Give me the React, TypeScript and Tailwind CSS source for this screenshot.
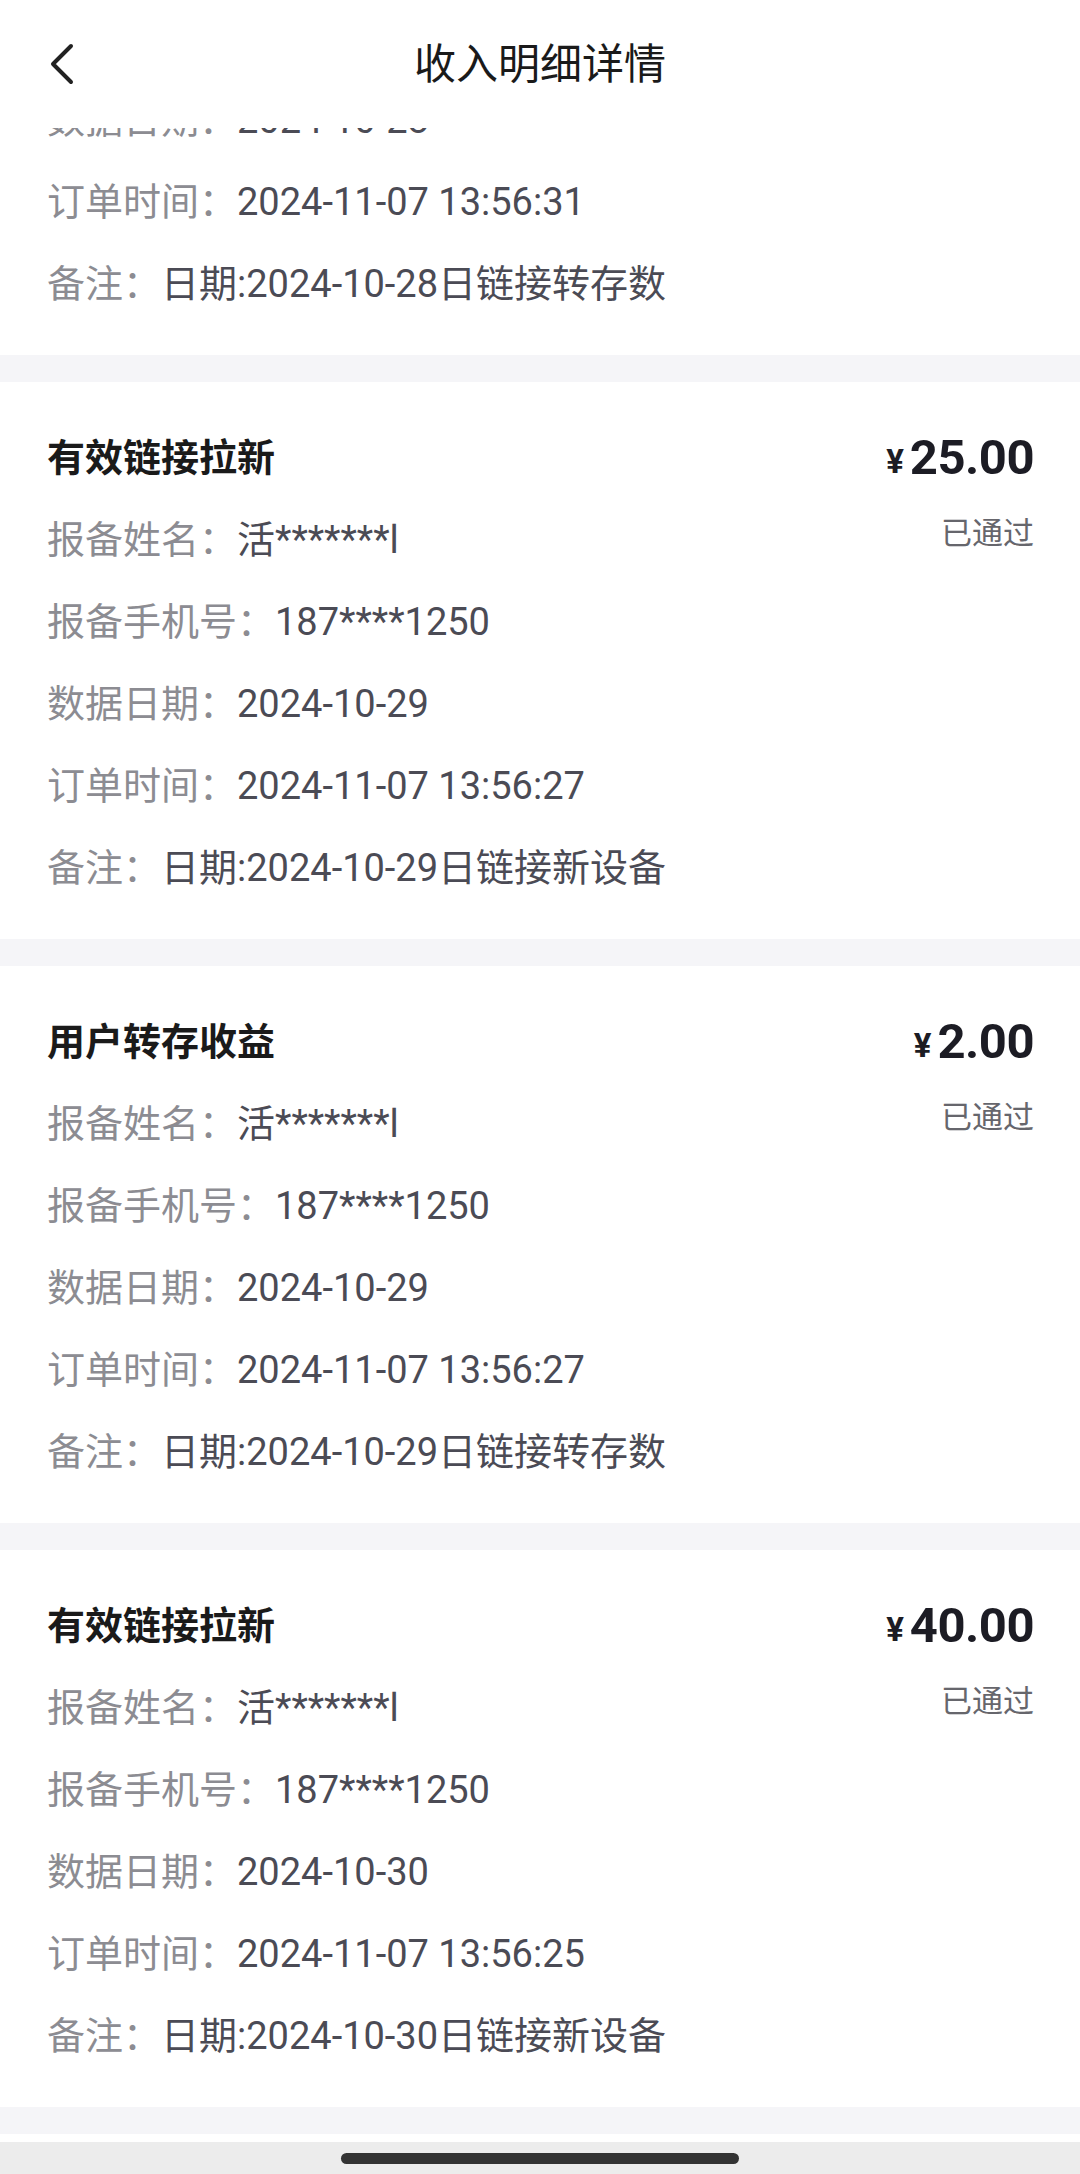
import React from "react";

type Item = {
  title: string;
  amount: string;
  date: string;
  time: string;
  note: string;
};

const items: Item[] = [
  {
    title: "有效链接拉新",
    amount: "25.00",
    date: "2024-10-29",
    time: "2024-11-07 13:56:27",
    note: "日期:2024-10-29日链接新设备",
  },
  {
    title: "用户转存收益",
    amount: "2.00",
    date: "2024-10-29",
    time: "2024-11-07 13:56:27",
    note: "日期:2024-10-29日链接转存数",
  },
  {
    title: "有效链接拉新",
    amount: "40.00",
    date: "2024-10-30",
    time: "2024-11-07 13:56:25",
    note: "日期:2024-10-30日链接新设备",
  },
];

function Row({ label, value }: { label: string; value: string }) {
  return (
    <div className="h-[82px] flex items-center whitespace-nowrap text-[38px]">
      <span className="text-[#8c8c92]">{label}</span>
      <span className="text-[#4b4b55]">{value}</span>
    </div>
  );
}

function Card({ item }: { item: Item }) {
  return (
    <div className="bg-white flex flex-row justify-between pl-[47px] pr-[46px] pt-[35px] pb-[30px] shrink-0">
      <div className="flex flex-col">
        <div className="h-[82px] flex items-center text-[38px] font-bold text-[#1a1a1a] whitespace-nowrap">
          {item.title}
        </div>
        <Row label="报备姓名：" value="活*******l" />
        <Row label="报备手机号：" value="187****1250" />
        <Row label="数据日期：" value={item.date} />
        <Row label="订单时间：" value={item.time} />
        <Row label="备注：" value={item.note} />
      </div>
      <div className="flex flex-col items-end">
        <div className="h-[82px] flex items-center font-bold text-[#1c1c24] whitespace-nowrap">
          <span className="text-[33px] mr-[6px] mt-[8px]">¥</span>
          <span className="text-[49px] tracking-[-0.5px]">{item.amount}</span>
        </div>
        <div className="mt-[15px] leading-[40px] text-[31px] text-[#66666c] whitespace-nowrap">
          已通过
        </div>
      </div>
    </div>
  );
}

export default function App() {
  return (
    <div
      className="w-[1080px] h-[2174px] bg-white flex flex-col overflow-hidden"
      style={{ fontFamily: 'Roboto, "Noto Sans CJK SC", "Noto Sans", sans-serif' }}
    >
      <header className="h-[128px] shrink-0 grid grid-cols-[1fr_auto_1fr] items-center bg-white relative z-10">
        <div className="pl-[49px] flex items-center">
          <svg width="26" height="44" viewBox="0 0 26 44" fill="none">
            <polyline
              points="22,4 4,22 22,40"
              stroke="#222222"
              strokeWidth="4"
              strokeLinecap="round"
              strokeLinejoin="round"
            />
          </svg>
        </div>
        <div className="text-[42px] text-[#1a1a1a] whitespace-nowrap">收入明细详情</div>
        <div />
      </header>
      <main className="h-[2014px] shrink-0 overflow-hidden bg-[#f5f5f8] flex flex-col gap-[27px]">
        {/* previous card, scrolled partly under the header */}
        <div className="bg-white pl-[47px] pr-[46px] pb-[30px] shrink-0 mt-[-49px] flex flex-col">
          <Row label="数据日期：" value="2024-10-28" />
          <Row label="订单时间：" value="2024-11-07 13:56:31" />
          <Row label="备注：" value="日期:2024-10-28日链接转存数" />
        </div>
        {items.map((it, i) => (
          <Card key={i} item={it} />
        ))}
        {/* top edge of the next card */}
        <div className="bg-white h-[40px] shrink-0" />
      </main>
      <div className="h-[32px] shrink-0 bg-[#ececec] flex items-center justify-center">
        <div className="w-[398px] h-[11px] rounded-full bg-[#333333]" />
      </div>
    </div>
  );
}
